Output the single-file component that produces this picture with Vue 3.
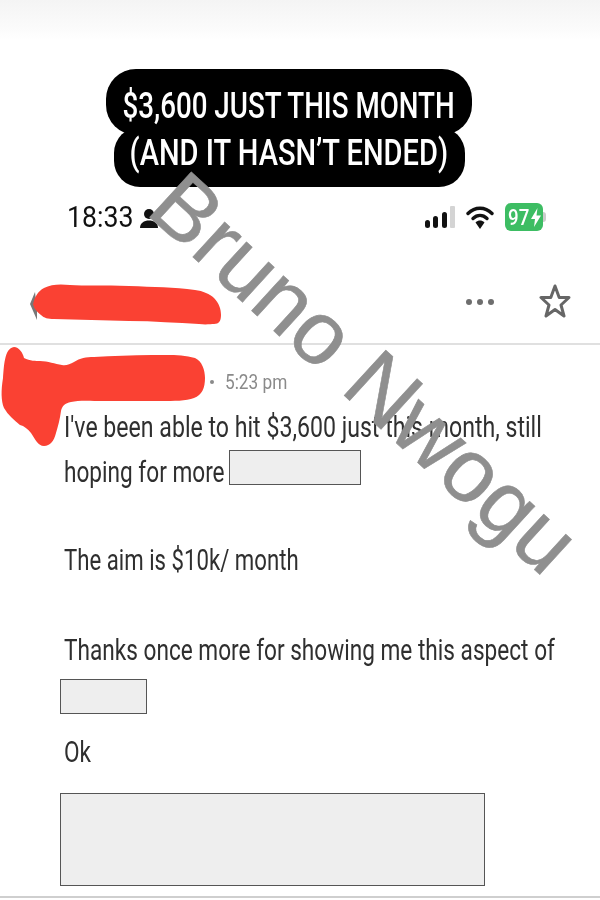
<template>
  <div class="shot">
    <div class="top-strip" />

    <div class="caption">
      <div class="caption__row caption__row--first"><span>$3,600 JUST THIS MONTH</span></div>
      <div class="caption__row caption__row--second"><span>(AND IT HASN’T ENDED)</span></div>
    </div>

    <div class="status">
      <span class="status__time">18:33</span>
      <svg class="status__person" width="18" height="20" viewBox="0 0 18 20">
        <circle cx="9" cy="6" r="5" fill="#111" />
        <path d="M0 20c0-5 4-7.500 9-7.500s9 2.500 9 7.500z" fill="#111" />
      </svg>
      <div class="status__right">
        <svg width="30" height="22" viewBox="0 0 30 22">
          <rect x="0" y="14" width="5" height="8" rx="2.500" fill="#111" />
          <rect x="8" y="10" width="5" height="12" rx="2.500" fill="#111" />
          <rect x="17" y="6" width="5" height="16" rx="2.500" fill="#111" />
          <rect x="25" y="0" width="5" height="22" rx="1" fill="#d4d4d4" />
        </svg>
        <svg class="status__wifi" width="28" height="24" viewBox="0 0 28 24">
          <path d="M2 8.500C9 1.500 19 1.500 26 8.500" fill="none" stroke="#111" stroke-width="3.400" stroke-linecap="round" />
          <path d="M7 13.500c4.200-4 9.800-4 14 0" fill="none" stroke="#111" stroke-width="3.400" stroke-linecap="round" />
          <path d="M9.500 17.500c3-2.600 6-2.600 9 0L14 24z" fill="#111" />
        </svg>
        <div class="battery">
          <span class="battery__num">97</span>
          <svg width="10" height="19" viewBox="0 0 10 19"><path d="M6.500 0L0 11h4l-1 8 7-11.500H5.500z" fill="#fff" /></svg>
        </div>
        <i class="battery__nub" />
      </div>
    </div>

    <header class="mail-head">
      <svg class="mail-head__name" width="192" height="44" viewBox="0 0 192 44">
        <path d="M1 22L6 10 8 28 8 38z" fill="#777" />
        <path d="M4 23C5 16 9 9 15 6 22 2 32 2 41 3 55 4 75 3 100 4c25 1 45 1 66 4 8 1 15 4 19 8 5 5 7 11 7 17 0 6-2 9-7 9-3 0-8 1-15 0-22-1-45-3-70-3-25-1-50-1-75-2-6 0-10-1-13-4-4-3-8-8-7-9z" fill="#fa4133" />
      </svg>
      <div class="mail-head__dots"><i /><i /><i /></div>
      <svg class="mail-head__star" width="32" height="36" viewBox="0 0 32 36">
        <path d="M16 3l4.200 11.500H30l-8 7.500 3 11-9-6.500-9 6.500 3-11-8-7.500h9.800z" fill="none" stroke="#666" stroke-width="3" stroke-linejoin="round" />
      </svg>
    </header>

    <main class="mail">
      <div class="mail__meta">
        <i class="mail__sep" />
        <span>5:23 pm</span>
      </div>
      <p class="line line--first"><span>I've been able to hit $3,600 just this month, still</span></p>
      <div class="line line--second">
        <span class="line__lead"><span>hoping for more</span></span>
        <div class="redact redact--short" />
      </div>
      <p class="line line--aim"><span>The aim is $10k/ month</span></p>
      <p class="line line--thanks"><span>Thanks once more for showing me this aspect of</span></p>
      <div class="redact redact--tiny" />
      <p class="line line--ok"><span>Ok</span></p>
      <div class="redact redact--large" />
    </main>

    <div class="bottom-rule" />

    <svg class="sender-blot" width="206" height="106" viewBox="0 0 206 106">
      <path d="M13 1c5 0 9 6 10 11 6 3 12 3 16 3 8 0 15 3 22 4 4 1 8-1 12-3 6-4 12-5 20-5 18-1 38-2 58-2 14 0 30-1 43 3 7 3 10 12 10 20 0 10-3 17-11 20-8 3-20 3-33 3-19 0-38 0-57 0-13 0-25-1-33 1-6 1-9 4-10 9-1 8-3 15-5 22-2 8-6 13-12 13-6 0-9-7-13-13-3-4-7-7-11-8C13 74 7 69 3 62 0 55 0 44 2 32 3 22 3 2 13 1z" fill="#fa4133" />
    </svg>

    <div class="watermark">Bruno Nwogu</div>
  </div>
</template>

<script setup>
</script>

<style>
html, body { margin: 0; background: #fff; }
</style>

<style scoped>
.shot {
  position: relative;
  width: 600px;
  height: 900px;
  overflow: hidden;
  background: #fff;
  font-family: Roboto, "Liberation Sans", sans-serif;
  color: #2f2f2f;
}

.top-strip {
  height: 40px;
  background: linear-gradient(to bottom, #f4f4f4, #fbfbfb 70%, #fff);
}

/* two stacked black bubbles */
.caption {
  margin-top: 29px;
  margin-left: -22px;
  display: flex;
  flex-direction: column;
  align-items: center;
}
.caption__row {
  box-sizing: border-box;
  display: flex;
  align-items: center;
  justify-content: center;
  background: #000;
  color: #fff;
  font-size: 37px;
  font-weight: 500;
  white-space: nowrap;
}
.caption__row span { display: block; filter: blur(.4px); }
.caption__row--first {
  width: 366px;
  height: 66px;
  padding-top: 6px;
  border-radius: 30px;
}
.caption__row--first span { transform: scaleX(.75); }
.caption__row--second {
  width: 351px;
  height: 60px;
  margin-top: -8px;
  padding-bottom: 10px;
  border-radius: 26px;
}
.caption__row--second span { transform: scaleX(.785); }

.status {
  display: flex;
  align-items: center;
  height: 44px;
  margin-top: 8px;
  padding: 0 54px 0 67px;
}
.status__time {
  width: 73px;
  font-size: 29px;
  color: #111;
  transform: scaleX(.92);
  transform-origin: left;
  filter: blur(.4px);
}
.status__person { margin-top: 1px; }
.status__right {
  display: flex;
  align-items: center;
  margin-left: auto;
}
.status__wifi { margin-left: 11px; }
.battery {
  display: flex;
  align-items: center;
  justify-content: center;
  width: 38px;
  height: 28px;
  margin-left: 11px;
  border-radius: 6px;
  background: #3dbd63;
}
.battery__num {
  width: 23px;
  color: #fff;
  font-size: 22px;
  font-weight: 500;
  transform: scaleX(.85);
  transform-origin: left;
}
.battery__nub {
  width: 3px;
  height: 10px;
  border-radius: 0 3px 3px 0;
  background: #ccc;
}

.mail-head {
  display: flex;
  align-items: center;
  height: 44px;
  margin-top: 43px;
  padding: 0 29px 0 29px;
}
.mail-head__name { flex-shrink: 0; }
.mail-head__dots {
  display: flex;
  gap: 5px;
  margin-left: auto;
  margin-right: 45px;
  margin-bottom: 4px;
}
.mail-head__dots i {
  width: 6px;
  height: 6px;
  border-radius: 50%;
  background: #6e6e6e;
}
.mail-head__star { margin-bottom: 6px; }

.mail {
  margin-top: 17px;
  padding-top: 22px;
  padding-left: 60px;
  border-top: 2px solid #e0e0e0;
}
.mail__meta {
  display: flex;
  align-items: center;
  height: 30px;
  padding-left: 150px;
  color: #8a8a8a;
  font-size: 21px;
}
.mail__sep {
  width: 4px;
  height: 4px;
  margin-right: 11px;
  border-radius: 50%;
  background: #8a8a8a;
}
.mail__meta span {
  display: block;
  transform: scaleX(.82);
  transform-origin: left;
  white-space: nowrap;
  filter: blur(.4px);
}

.line {
  display: flex;
  align-items: center;
  height: 40px;
  margin: 0;
  padding-left: 4px;
  font-size: 29px;
  white-space: nowrap;
}
.line > span {
  display: block;
  transform: scaleX(.78);
  transform-origin: left;
  filter: blur(.4px);
}
.line--first { margin-top: 10px; }
.line--first > span { transform: scaleX(.797); }
.line--second { height: 36px; margin-top: 2px; }
.line__lead { width: 165px; flex-shrink: 0; margin-top: 9px; }
.line__lead > span { display: block; }
.line--aim { margin-top: 55px; }
.line--aim > span { transform: scaleX(.765); }
.line--thanks { margin-top: 50px; }
.line--ok { margin-top: 18px; }

.redact {
  box-sizing: border-box;
  background: #eee;
  border: 1px solid #555;
}
.redact--short { width: 132px; height: 35px; }
.redact--tiny { width: 87px; height: 35px; margin-top: 9px; }
.redact--large { width: 425px; height: 93px; margin-top: 21px; }

.bottom-rule {
  position: absolute;
  left: 0;
  right: 0;
  top: 896px;
  height: 2px;
  background: #cfcfcf;
}

.sender-blot {
  position: absolute;
  left: 1px;
  top: 346px;
}

.watermark {
  position: absolute;
  left: 195px;
  top: 157px;
  font-family: "Liberation Sans", sans-serif;
  font-size: 89.500px;
  line-height: 1;
  color: #8f8f8f;
  -webkit-text-stroke: .6px #8f8f8f;
  white-space: nowrap;
  transform: rotate(42.500deg);
  transform-origin: left top;
}
</style>
